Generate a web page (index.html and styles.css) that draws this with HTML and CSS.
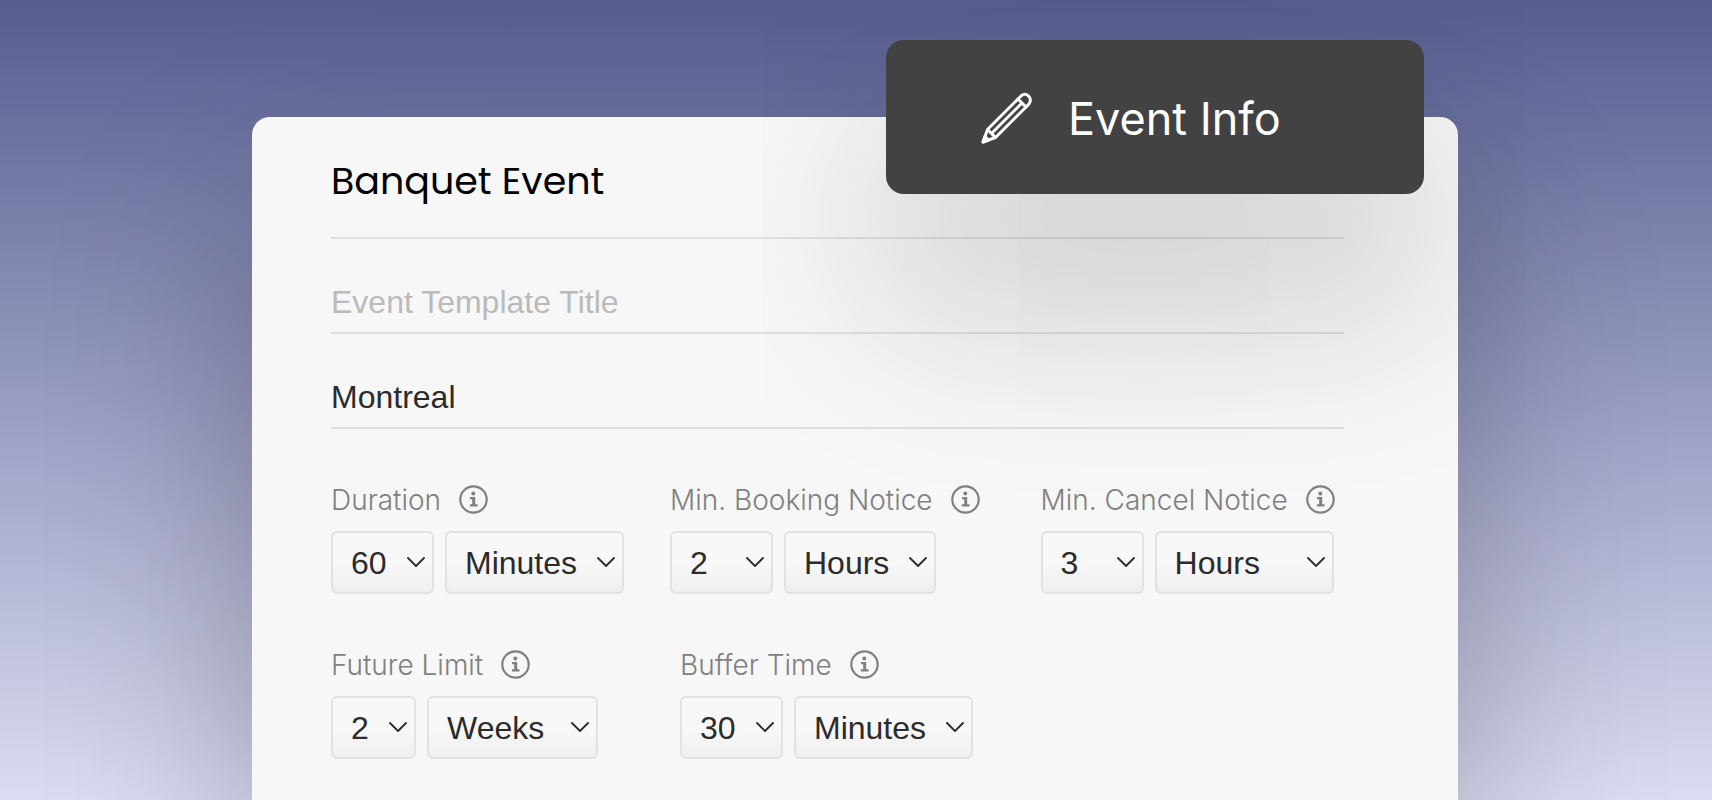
FILE: index.html
```
<!DOCTYPE html>
<html lang="en">
<head>
    <meta charset="UTF-8">
    <meta name="viewport" content="width=device-width, initial-scale=1.0">
    <title>Event Info</title>
    <link rel="stylesheet" href="styles.css">
</head>
<body>
    <!-- Shared icons -->
    <svg class="icon-defs" aria-hidden="true">
        <symbol id="icon-info" viewBox="0 0 29 29">
            <circle cx="14.5" cy="14.5" r="13.2" fill="none" stroke="currentColor" stroke-width="2.2"/>
            <circle cx="14.3" cy="8.6" r="2" fill="currentColor"/>
            <path d="M11 12h5.2v7.2h2.3v2.2h-7.6v-2.2h2.3v-5h-2.2z" fill="currentColor"/>
        </symbol>
        <symbol id="icon-chevron" viewBox="0 0 18 10">
            <path d="M1 1l8 8 8-8" fill="none" stroke="currentColor" stroke-width="1.8" stroke-linecap="round" stroke-linejoin="round"/>
        </symbol>
    </svg>

    <main class="event-card">
        <button type="button" class="event-tab">
            <svg class="pencil-icon" viewBox="0 0 52 52" fill="none" stroke="currentColor" stroke-width="3" stroke-linejoin="round" stroke-linecap="round" aria-hidden="true">
                <path d="M2 50l4.500-12.500L40 4q4-3.500 7.500 0t.5 8L14.500 45.500z"/>
                <path d="M7 38l7 7M37 7l8 8M11 41L41 11"/>
                <path d="M2 50l2-5.500 3.500 3.500z" fill="currentColor"/>
            </svg>
            Event Info
        </button>

        <form class="event-form">
            <input class="text-field title-field" type="text" value="Banquet Event" aria-label="Event name">
            <input class="text-field" type="text" placeholder="Event Template Title" aria-label="Event template title">
            <input class="text-field" type="text" value="Montreal" aria-label="Location">

            <div class="settings-row">
                <div class="setting">
                    <label class="setting-label" for="duration">Duration <svg class="info-icon"><use href="#icon-info"/></svg></label>
                    <div class="setting-selects">
                        <div class="select-box amount">
                            <select id="duration"><option>60</option></select>
                            <svg class="chevron"><use href="#icon-chevron"/></svg>
                        </div>
                        <div class="select-box unit">
                            <select aria-label="Duration unit"><option>Minutes</option></select>
                            <svg class="chevron"><use href="#icon-chevron"/></svg>
                        </div>
                    </div>
                </div>

                <div class="setting booking">
                    <label class="setting-label" for="booking">Min. Booking Notice <svg class="info-icon"><use href="#icon-info"/></svg></label>
                    <div class="setting-selects">
                        <div class="select-box amount">
                            <select id="booking"><option>2</option></select>
                            <svg class="chevron"><use href="#icon-chevron"/></svg>
                        </div>
                        <div class="select-box unit-short">
                            <select aria-label="Booking notice unit"><option>Hours</option></select>
                            <svg class="chevron"><use href="#icon-chevron"/></svg>
                        </div>
                    </div>
                </div>

                <div class="setting">
                    <label class="setting-label" for="cancel">Min. Cancel Notice <svg class="info-icon"><use href="#icon-info"/></svg></label>
                    <div class="setting-selects">
                        <div class="select-box amount">
                            <select id="cancel"><option>3</option></select>
                            <svg class="chevron"><use href="#icon-chevron"/></svg>
                        </div>
                        <div class="select-box unit">
                            <select aria-label="Cancel notice unit"><option>Hours</option></select>
                            <svg class="chevron"><use href="#icon-chevron"/></svg>
                        </div>
                    </div>
                </div>
            </div>

            <div class="settings-row limits">
                <div class="setting">
                    <label class="setting-label" for="future">Future Limit <svg class="info-icon"><use href="#icon-info"/></svg></label>
                    <div class="setting-selects">
                        <div class="select-box amount-short">
                            <select id="future"><option>2</option></select>
                            <svg class="chevron"><use href="#icon-chevron"/></svg>
                        </div>
                        <div class="select-box unit-medium">
                            <select aria-label="Future limit unit"><option>Weeks</option></select>
                            <svg class="chevron"><use href="#icon-chevron"/></svg>
                        </div>
                    </div>
                </div>

                <div class="setting">
                    <label class="setting-label" for="buffer">Buffer Time <svg class="info-icon"><use href="#icon-info"/></svg></label>
                    <div class="setting-selects">
                        <div class="select-box amount">
                            <select id="buffer"><option>30</option></select>
                            <svg class="chevron"><use href="#icon-chevron"/></svg>
                        </div>
                        <div class="select-box unit">
                            <select aria-label="Buffer time unit"><option>Minutes</option></select>
                            <svg class="chevron"><use href="#icon-chevron"/></svg>
                        </div>
                    </div>
                </div>
            </div>
        </form>
    </main>
</body>
</html>
```
FILE: styles.css
```
* {
    box-sizing: border-box;
}
body {
    margin: 0;
    min-height: 100vh;
    padding: 117px 254px 0 252px;
    display: flex;
    font-family: "Liberation Sans", Arial, sans-serif;
    background: linear-gradient(#565d8f, #dadcf2);
}
.icon-defs {
    display: none;
}

/* Card */
.event-card {
    position: relative;
    flex: 1;
    padding: 34px 114px 40px 79px;
    background: #f7f7f7;
    border-radius: 18px 18px 0 0;
    box-shadow: 0 100px 200px rgba(0, 0, 0, 0.27);
}

/* Floating tab over the top right corner of the card */
.event-tab {
    position: absolute;
    top: -77px;
    right: 34px;
    width: 538px;
    height: 154px;
    padding: 2px 0 0 95px;
    display: flex;
    align-items: center;
    gap: 35px;
    border: none;
    border-radius: 18px;
    background: #424242;
    color: #fff;
    font-family: Inter, sans-serif;
    font-size: 45px;
    box-shadow: 0 100px 200px rgba(0, 0, 0, 0.22);
    cursor: pointer;
}
.pencil-icon {
    width: 52px;
    height: 52px;
}

/* Text fields */
.text-field {
    display: block;
    width: 100%;
    height: 62px;
    margin: 33px 0 0;
    padding: 0;
    border: none;
    border-bottom: 2px solid #e0e0e0;
    border-radius: 0;
    outline: none;
    background: transparent;
    color: #2b2b2b;
    font-family: inherit;
    font-size: 32px;
}
.text-field::placeholder {
    color: #bababa;
    opacity: 1;
}
.title-field {
    height: 88px;
    margin-top: 0;
    padding-bottom: 28px;
    color: #000;
    font-family: Poppins, Inter, sans-serif;
    font-size: 38px;
}

/* Settings */
.settings-row {
    display: flex;
    gap: 46px;
    margin-top: 56px;
}
.limits {
    gap: 82px;
}
.booking {
    padding-right: 15px;
}
.setting-label {
    display: flex;
    align-items: center;
    gap: 18px;
    height: 29px;
    margin-bottom: 17px;
    color: #808080;
    font-family: Inter, sans-serif;
    font-size: 28px;
    font-weight: 300;
    white-space: nowrap;
}
.info-icon {
    width: 29px;
    height: 29px;
    flex-shrink: 0;
}
.setting-selects {
    display: flex;
    gap: 11px;
}
.select-box {
    position: relative;
    color: #2b2b2b;
}
.select-box select {
    appearance: none;
    display: block;
    width: 100%;
    height: 63px;
    padding: 0 0 0 18px;
    border: 2px solid #e2e2e2;
    border-radius: 6px;
    background: linear-gradient(#f8f8f8 50%, #f0eff0);
    color: inherit;
    font-family: inherit;
    font-size: 32px;
}
.chevron {
    position: absolute;
    top: 26px;
    right: 9px;
    width: 18px;
    height: 10px;
    pointer-events: none;
}
.amount {
    width: 103px;
}
.amount-short {
    width: 85px;
}
.unit {
    width: 179px;
}
.unit-medium {
    width: 171px;
}
.unit-short {
    width: 152px;
}
```
